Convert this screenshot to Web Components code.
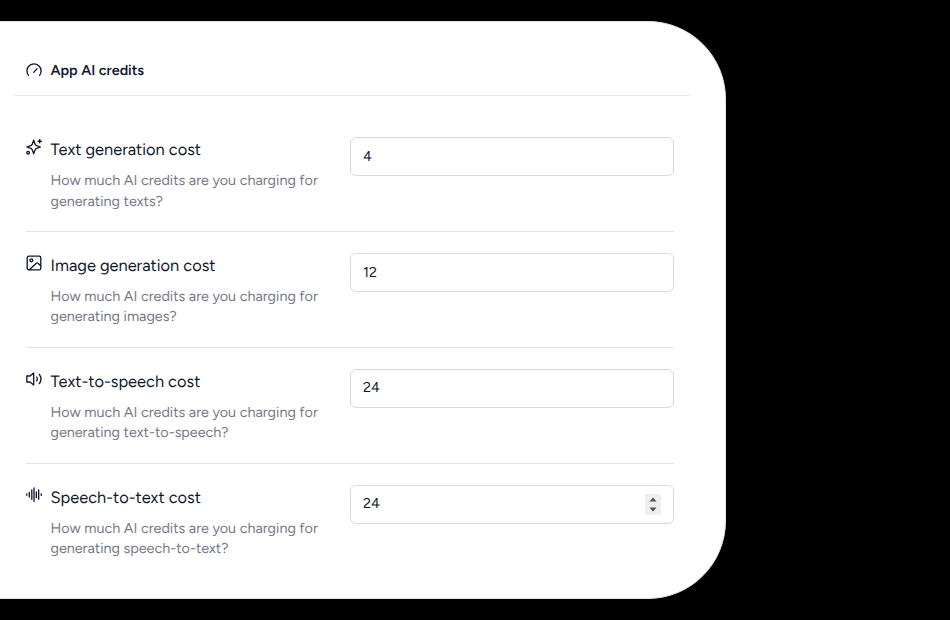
<!DOCTYPE html>
<html lang="en">
<head>
<meta charset="utf-8">
<title>App AI credits</title>
<style>
  body {
    margin: 0;
    height: 620px;
    overflow: hidden;
    background: #000;
    color: #11182b;
    font-family: Figtree, Inter, sans-serif;
    text-rendering: geometricPrecision;
  }
</style>
</head>
<body>
<credits-card>
  <card-title slot="title">App AI credits</card-title>
  <credit-row icon="sparkles">
    <span slot="name">Text generation cost</span>
    <span slot="help">How much AI credits are you charging for<br>generating texts?</span>
    <number-field>4</number-field>
  </credit-row>
  <credit-row icon="image">
    <span slot="name">Image generation cost</span>
    <span slot="help">How much AI credits are you charging for<br>generating images?</span>
    <number-field>12</number-field>
  </credit-row>
  <credit-row icon="volume">
    <span slot="name">Text-to-speech cost</span>
    <span slot="help">How much AI credits are you charging for<br>generating text-to-speech?</span>
    <number-field>24</number-field>
  </credit-row>
  <credit-row icon="wave">
    <span slot="name">Speech-to-text cost</span>
    <span slot="help">How much AI credits are you charging for<br>generating speech-to-text?</span>
    <number-field active>24</number-field>
  </credit-row>
</credits-card>

<script>
  const icons = {
    gauge: '<path d="M3.6 20A10.6 10.6 0 1 1 20.4 20M11.5 15.5l5-5.5"/>',
    sparkles: '<path d="M11.5 1.8l2 5.6q.6 1.8 2.4 2.4l5.8 2.2-5.8 2.2q-1.8.6-2.4 2.4l-2 5.6-2-5.6q-.6-1.8-2.4-2.4L1.3 12l5.8-2.2q1.8-.6 2.4-2.4z"/><path d="M20.6 1v4.8M18.2 3.4H23" stroke-width="2.2"/><circle cx="3.2" cy="20.5" r="2"/>',
    image: '<rect x="1.8" y="1.8" width="20.4" height="20.4" rx="2.5"/><circle cx="8" cy="8" r="2.2"/><path d="M5 22L15.5 12.3q1.3-1 2.5 0L22 16"/>',
    volume: '<path d="M11.5 3v18L6 16.5H1.2v-9H6z"/><path d="M16 9q2 3 0 6M20 5q5 7 0 14"/>',
    wave: '<path d="M1.2 10.5v2M5 8v7M8.7 4.5v14M12 1.5v20M15.5 7.5v8.5M19 4.5v14M22.8 10.5v2"/>'
  };

  function drawIcon(name) {
    return `<svg width="16" height="16" viewBox="0 0 24 24" fill="none" stroke="#11182b"
      stroke-width="2" stroke-linecap="round" stroke-linejoin="round">${icons[name]}</svg>`;
  }

  class CreditsCard extends HTMLElement {
    connectedCallback() {
      const shadow = this.attachShadow({mode: "open"});
      shadow.innerHTML = `
        <style>
          :host {
            display: block;
            box-sizing: border-box;
            width: 826px;
            height: 578px;
            margin: 21px 0 0 -100px;
            padding: 0 35px 0 113px;
            background: #fff;
            border: 1.5px solid #e3e5ea;
            border-radius: 78px;
            overflow: hidden;
          }
          header {
            height: 73px;
            border-bottom: 1px solid #e5e6e9;
          }
          main {
            display: flex;
            flex-direction: column;
            padding: 20px 16px 0 12px;
          }
        </style>
        <header><slot name="title"></slot></header>
        <main><slot></slot></main>`;
    }
  }

  class CardTitle extends HTMLElement {
    connectedCallback() {
      const shadow = this.attachShadow({mode: "open"});
      shadow.innerHTML = `
        <style>
          :host {
            display: flex;
            gap: 8.5px;
            padding: 38px 0 0 12px;
            font-size: 14.37px;
            line-height: 20px;
            font-weight: 600;
          }
          svg { margin-top: 2px; }
        </style>
        ${drawIcon("gauge")}<span><slot></slot></span>`;
    }
  }

  class CreditRow extends HTMLElement {
    connectedCallback() {
      const shadow = this.attachShadow({mode: "open"});
      shadow.innerHTML = `
        <style>
          :host {
            display: grid;
            grid-template-columns: 24.5px 299.5px 324px;
            align-items: start;
            box-sizing: border-box;
            height: 115.9px;
            padding-top: 21px;
            border-bottom: 1px solid #e2e4e8;
          }
          :host(:last-of-type) { border-bottom: 0; }
          svg { display: block; margin-top: 2px; }
          .name {
            padding-top: 0.9px;
            font-size: 16.42px;
            line-height: 24.6px;
          }
          .help {
            margin-top: 7.5px;
            color: #777a87;
            font-size: 14.37px;
            line-height: 20.6px;
            white-space: nowrap;
          }
        </style>
        ${drawIcon(this.getAttribute("icon"))}
        <div>
          <div class="name"><slot name="name"></slot></div>
          <div class="help"><slot name="help"></slot></div>
        </div>
        <slot></slot>`;
    }
  }

  class NumberField extends HTMLElement {
    connectedCallback() {
      const shadow = this.attachShadow({mode: "open"});
      // stepper is only shown on the hovered field
      const spin = this.hasAttribute("active")
        ? `<svg width="16" height="21" viewBox="0 0 16 21"><path fill="#efefef" d="M0 0h16v21H0z"/>
           <path fill="#505050" d="M4.5 7.5L8 3.5l3.5 4zM4.5 13.5h7L8 17.5z"/></svg>` : "";
      shadow.innerHTML = `
        <style>
          :host {
            display: flex;
            align-items: center;
            justify-content: space-between;
            box-sizing: border-box;
            height: 39px;
            padding: 0 12px;
            border: 1px solid #d7d9e2;
            border-radius: 6px;
            font-size: 14.37px;
            line-height: 19.6px;
          }
        </style>
        <span><slot></slot></span>${spin}`;
    }
  }

  customElements.define("credits-card", CreditsCard);
  customElements.define("card-title", CardTitle);
  customElements.define("credit-row", CreditRow);
  customElements.define("number-field", NumberField);
</script>
</body>
</html>
